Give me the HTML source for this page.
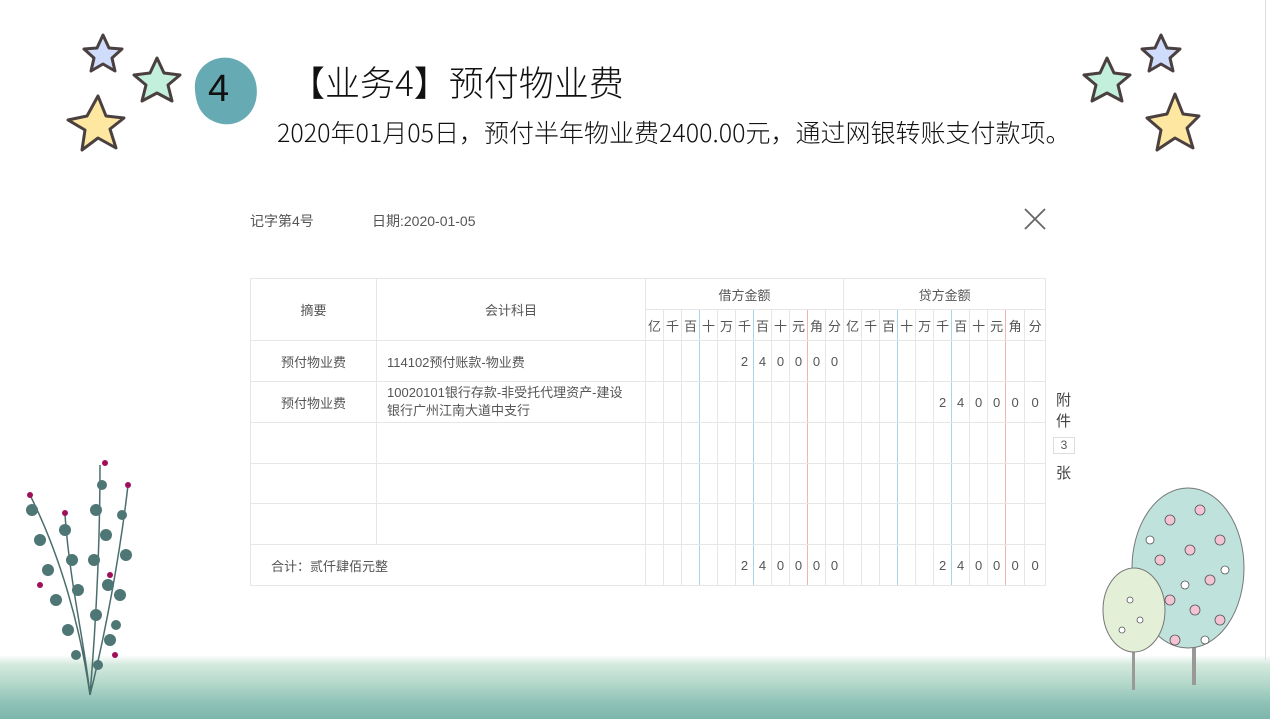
<!DOCTYPE html>
<html><head><meta charset="utf-8"><style>
*{margin:0;padding:0;box-sizing:border-box}
body{width:1270px;height:719px;overflow:hidden;background:#fff;position:relative;font-family:"Liberation Sans","Noto Sans CJK SC",sans-serif;color:#555}
.abs{position:absolute}
table{border-collapse:collapse;table-layout:fixed;position:absolute;left:250px;top:278px;width:794px;font-size:13px;color:#555}
td{border:1px solid #e6e6e6;text-align:center;padding:0}
.b{border-right:1px solid #a9d4f0}
.r{border-right:1px solid #f0b4b4}
.acc{text-align:left;padding-left:10px;font-size:13px;white-space:nowrap}
</style></head><body>
<div class="abs" style="left:0;top:655px;width:1270px;height:64px;background:linear-gradient(180deg,rgba(215,235,225,0) 0%,#d4e9de 15%,#b3d8ca 45%,#8ec2b6 75%,#7eb5ab 100%)"></div>
<div class="abs" style="left:1265px;top:0;width:1px;height:660px;background:#ddd"></div>

<svg class="abs" style="left:60px;top:30px" width="200" height="130">
<polygon points="43,5 49,18 62,19 52,28 55,41 43,34 31,41 34,28 24,19 37,18" fill="#cfdcfb" stroke="#4a4040" stroke-width="3" stroke-linejoin="round"/>
<polygon points="97,28 104,43 120,45 108,55 112,71 97,63 82,71 86,55 74,45 90,43" fill="#c2f0dc" stroke="#4a4040" stroke-width="3" stroke-linejoin="round"/>
<polygon points="38,66 46,86 64,88 50,99 56,118 38,108 22,120 25,100 8,90 27,86" fill="#fde7a1" stroke="#4a4040" stroke-width="3" stroke-linejoin="round"/>
<path d="M135 60C133 40 150 25 170 28C190 32 200 50 196 70C192 88 175 98 158 93C142 88 136 76 135 60Z" fill="#4b9ba6" opacity=".85"/>
</svg>
<div class="abs" style="left:208px;top:68px;font-size:38px;color:#111">4</div>
<div class="abs" style="left:290px;top:56px;font-size:35px;color:#111;font-family:'Noto Sans CJK SC',sans-serif;font-weight:300">【业务4】预付物业费</div>
<div class="abs" style="left:277px;top:114px;font-size:25px;color:#111;font-family:'Noto Sans CJK SC',sans-serif;font-weight:300;white-space:nowrap">2020年01月05日，预付半年物业费2400.00元，通过网银转账支付款项。</div>

<svg class="abs" style="left:1075px;top:30px" width="130" height="130">
<polygon points="86,5 92,18 105,19 95,28 98,41 86,34 74,41 77,28 67,19 80,18" fill="#cfdcfb" stroke="#4a4040" stroke-width="3" stroke-linejoin="round"/>
<polygon points="32,28 39,43 55,45 43,55 47,71 32,63 17,71 21,55 9,45 25,43" fill="#c2f0dc" stroke="#4a4040" stroke-width="3" stroke-linejoin="round"/>
<polygon points="100,64 108,84 124,86 112,98 118,118 100,108 82,120 86,100 72,88 92,84" fill="#fde7a1" stroke="#4a4040" stroke-width="3" stroke-linejoin="round"/>
</svg>

<div class="abs" style="left:250px;top:211px;font-size:14px">记字第4号</div>
<div class="abs" style="left:372px;top:211px;font-size:14px">日期:2020-01-05</div>
<svg class="abs" style="left:1024px;top:208px" width="22" height="22"><path d="M1 1L21 21M21 1L1 21" stroke="#666" stroke-width="1.8"/></svg>

<table>
<colgroup><col style="width:126px"><col style="width:269px">
<col style="width:18px"><col style="width:18px"><col style="width:18px"><col style="width:18px"><col style="width:18px"><col style="width:18px"><col style="width:18px"><col style="width:18px"><col style="width:18px"><col style="width:18px"><col style="width:18px">
<col style="width:18px"><col style="width:18px"><col style="width:18px"><col style="width:18px"><col style="width:18px"><col style="width:18px"><col style="width:18px"><col style="width:18px"><col style="width:18px"><col style="width:19px"><col style="width:21px">
</colgroup>
<tr style="height:31px"><td rowspan="2">摘要</td><td rowspan="2">会计科目</td><td colspan="11">借方金额</td><td colspan="11">贷方金额</td></tr>
<tr style="height:31px"><td>亿</td><td>千</td><td class="b">百</td><td>十</td><td>万</td><td class="b">千</td><td>百</td><td>十</td><td class="r">元</td><td>角</td><td>分</td><td>亿</td><td>千</td><td class="b">百</td><td>十</td><td>万</td><td class="b">千</td><td>百</td><td>十</td><td class="r">元</td><td>角</td><td>分</td></tr>
<tr style="height:41px"><td>预付物业费</td><td class="acc">114102预付账款-物业费</td><td></td><td></td><td class="b"></td><td></td><td></td><td class="b">2</td><td>4</td><td>0</td><td class="r">0</td><td>0</td><td>0</td><td></td><td></td><td class="b"></td><td></td><td></td><td class="b"></td><td></td><td></td><td class="r"></td><td></td><td></td></tr>
<tr style="height:41px"><td>预付物业费</td><td class="acc" style="line-height:18px">10020101银行存款-非受托代理资产-建设<br>银行广州江南大道中支行</td><td></td><td></td><td class="b"></td><td></td><td></td><td class="b"></td><td></td><td></td><td class="r"></td><td></td><td></td><td></td><td></td><td class="b"></td><td></td><td></td><td class="b">2</td><td>4</td><td>0</td><td class="r">0</td><td>0</td><td>0</td></tr>
<tr style="height:41px"><td></td><td></td><td></td><td></td><td class="b"></td><td></td><td></td><td class="b"></td><td></td><td></td><td class="r"></td><td></td><td></td><td></td><td></td><td class="b"></td><td></td><td></td><td class="b"></td><td></td><td></td><td class="r"></td><td></td><td></td></tr>
<tr style="height:40px"><td></td><td></td><td></td><td></td><td class="b"></td><td></td><td></td><td class="b"></td><td></td><td></td><td class="r"></td><td></td><td></td><td></td><td></td><td class="b"></td><td></td><td></td><td class="b"></td><td></td><td></td><td class="r"></td><td></td><td></td></tr>
<tr style="height:41px"><td></td><td></td><td></td><td></td><td class="b"></td><td></td><td></td><td class="b"></td><td></td><td></td><td class="r"></td><td></td><td></td><td></td><td></td><td class="b"></td><td></td><td></td><td class="b"></td><td></td><td></td><td class="r"></td><td></td><td></td></tr>
<tr style="height:41px"><td colspan="2" style="text-align:left;padding-left:20px">合计：贰仟肆佰元整</td><td></td><td></td><td class="b"></td><td></td><td></td><td class="b">2</td><td>4</td><td>0</td><td class="r">0</td><td>0</td><td>0</td><td></td><td></td><td class="b"></td><td></td><td></td><td class="b">2</td><td>4</td><td>0</td><td class="r">0</td><td>0</td><td>0</td></tr>
</table>
<div class="abs" style="left:1056px;top:390px;font-size:15px;line-height:21px;color:#444">附<br>件</div>
<div class="abs" style="left:1053px;top:437px;width:22px;height:17px;border:1px solid #ddd;font-size:12px;text-align:center;line-height:15px">3</div>
<div class="abs" style="left:1056px;top:462px;font-size:15px;color:#444">张</div>

<svg class="abs" style="left:10px;top:455px" width="130" height="245">
<g stroke="#4b6e6c" stroke-width="1.5" fill="none"><path d="M80 240C85 180 90 100 90 10M80 240C70 170 50 100 20 40M80 240C75 190 60 130 55 60M80 240C95 180 110 100 118 30"/></g>
<g fill="#4e7674">
<circle cx="92" cy="30" r="5"/><circle cx="86" cy="55" r="6"/><circle cx="96" cy="80" r="6"/><circle cx="84" cy="105" r="6"/><circle cx="98" cy="130" r="6"/><circle cx="86" cy="160" r="6"/><circle cx="100" cy="185" r="6"/><circle cx="88" cy="210" r="5"/>
<circle cx="22" cy="55" r="6"/><circle cx="30" cy="85" r="6"/><circle cx="38" cy="115" r="6"/><circle cx="46" cy="145" r="6"/><circle cx="58" cy="175" r="6"/><circle cx="66" cy="200" r="5"/>
<circle cx="55" cy="75" r="6"/><circle cx="62" cy="105" r="6"/><circle cx="68" cy="135" r="6"/><circle cx="112" cy="60" r="5"/><circle cx="116" cy="100" r="6"/><circle cx="110" cy="140" r="6"/><circle cx="106" cy="170" r="5"/>
</g>
<g fill="#a0105a"><circle cx="95" cy="8" r="3"/><circle cx="118" cy="30" r="3"/><circle cx="20" cy="40" r="3"/><circle cx="55" cy="58" r="3"/><circle cx="100" cy="120" r="3"/><circle cx="30" cy="130" r="3"/><circle cx="105" cy="200" r="3"/></g>
</svg>

<svg class="abs" style="left:1100px;top:480px" width="150" height="210">
<rect x="92" y="100" width="4" height="105" fill="#999"/>
<rect x="32" y="150" width="3" height="60" fill="#999"/>
<ellipse cx="88" cy="88" rx="56" ry="80" fill="#bfe3dc" stroke="#777"/>
<ellipse cx="34" cy="130" rx="31" ry="42" fill="#e3efd6" stroke="#777"/>
<g fill="#f4c4d4" stroke="#555" stroke-width=".8"><circle cx="70" cy="40" r="5"/><circle cx="100" cy="30" r="5"/><circle cx="120" cy="60" r="5"/><circle cx="60" cy="80" r="5"/><circle cx="90" cy="70" r="5"/><circle cx="110" cy="100" r="5"/><circle cx="70" cy="120" r="5"/><circle cx="95" cy="130" r="5"/><circle cx="120" cy="140" r="5"/><circle cx="75" cy="160" r="5"/></g>
<g fill="#fff" stroke="#555" stroke-width=".8"><circle cx="50" cy="60" r="4"/><circle cx="125" cy="90" r="4"/><circle cx="85" cy="105" r="4"/><circle cx="105" cy="160" r="4"/><circle cx="30" cy="120" r="3"/><circle cx="40" cy="140" r="3"/><circle cx="22" cy="150" r="3"/></g>
</svg>
</body></html>
